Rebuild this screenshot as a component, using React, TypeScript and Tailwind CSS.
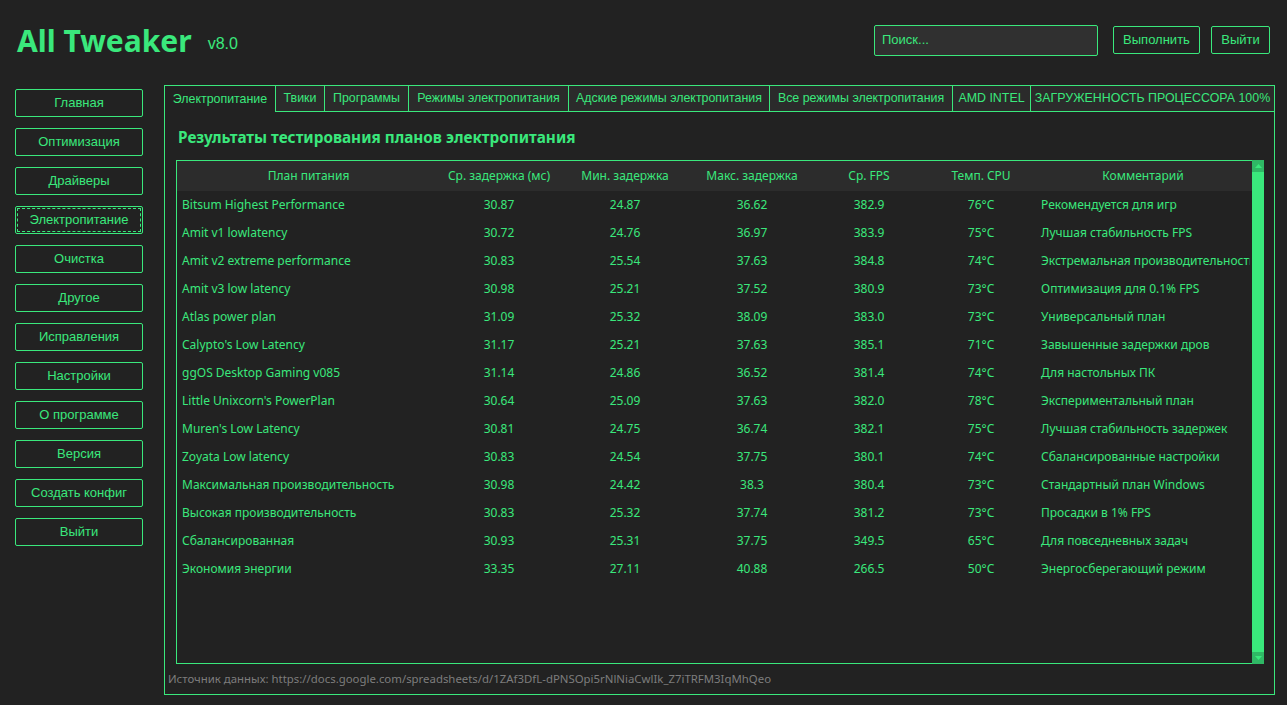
import React from 'react';

const tabs = [
  { label: 'Электропитание', w: 'w-[112px]' },
  { label: 'Твики', w: 'w-[49px]' },
  { label: 'Программы', w: 'w-[84px]' },
  { label: 'Режимы электропитания', w: 'w-[160px]' },
  { label: 'Адские режимы электропитания', w: 'w-[201px]' },
  { label: 'Все режимы электропитания', w: 'w-[183px]' },
  { label: 'AMD INTEL', w: 'w-[78px]' },
  { label: 'ЗАГРУЖЕННОСТЬ ПРОЦЕССОРА 100%', w: 'flex-1' },
];

const menu = [
  'Главная',
  'Оптимизация',
  'Драйверы',
  'Электропитание',
  'Очистка',
  'Другое',
  'Исправления',
  'Настройки',
  'О программе',
  'Версия',
  'Создать конфиг',
  'Выйти',
];

const rows: string[][] = [
  ['Bitsum Highest Performance', '30.87', '24.87', '36.62', '382.9', '76°C', 'Рекомендуется для игр'],
  ['Amit v1 lowlatency', '30.72', '24.76', '36.97', '383.9', '75°C', 'Лучшая стабильность FPS'],
  ['Amit v2 extreme performance', '30.83', '25.54', '37.63', '384.8', '74°C', 'Экстремальная производительность'],
  ['Amit v3 low latency', '30.98', '25.21', '37.52', '380.9', '73°C', 'Оптимизация для 0.1% FPS'],
  ['Atlas power plan', '31.09', '25.32', '38.09', '383.0', '73°C', 'Универсальный план'],
  ["Calypto's Low Latency", '31.17', '25.21', '37.63', '385.1', '71°C', 'Завышенные задержки дров'],
  ['ggOS Desktop Gaming v085', '31.14', '24.86', '36.52', '381.4', '74°C', 'Для настольных ПК'],
  ["Little Unixcorn's PowerPlan", '30.64', '25.09', '37.63', '382.0', '78°C', 'Экспериментальный план'],
  ["Muren's Low Latency", '30.81', '24.75', '36.74', '382.1', '75°C', 'Лучшая стабильность задержек'],
  ['Zoyata Low latency', '30.83', '24.54', '37.75', '380.1', '74°C', 'Сбалансированные настройки'],
  ['Максимальная производительность', '30.98', '24.42', '38.3', '380.4', '73°C', 'Стандартный план Windows'],
  ['Высокая производительность', '30.83', '25.32', '37.74', '381.2', '73°C', 'Просадки в 1% FPS'],
  ['Сбалансированная', '30.93', '25.31', '37.75', '349.5', '65°C', 'Для повседневных задач'],
  ['Экономия энергии', '33.35', '27.11', '40.88', '266.5', '50°C', 'Энергосберегающий режим'],
];

const headers = ['План питания', 'Ср. задержка (мс)', 'Мин. задержка', 'Макс. задержка', 'Ср. FPS', 'Темп. CPU', 'Комментарий'];
const colW = ['w-[263px]', 'w-[118px]', 'w-[134px]', 'w-[120px]', 'w-[114px]', 'w-[110px]', 'w-[214px]'];

function ScrollArrow({ up }: { up?: boolean }) {
  return (
    <div className="h-[12px] w-[12px] bg-[#2fb865] flex items-center justify-center">
      <svg width="7" height="4" viewBox="0 0 7 4">
        <path d={up ? 'M0 4 L3.5 0 L7 4 Z' : 'M0 0 L3.5 4 L7 0 Z'} fill="#3ae87c" />
      </svg>
    </div>
  );
}

export default function App() {
  return (
    <div className="w-[1287px] h-[705px] bg-[#222222] overflow-hidden text-[#3ae87c] font-['Liberation_Sans',Arial,sans-serif]">
      {/* Header */}
      <div className="h-[80px] flex items-center pl-[17px] pr-[17px]">
        <h1 className="text-[30px] leading-none font-bold font-['Noto_Sans',sans-serif] mt-[2px]">All Tweaker</h1>
        <span className="ml-[16px] text-[16px] mt-[8px]">v8.0</span>
        <div className="ml-auto w-[224px] h-[31px] border border-[#3ae87c] bg-[#303030] rounded-[2px] flex items-center px-[7px] text-[13px]">
          Поиск...
        </div>
        <button className="ml-[15px] w-[87px] h-[28px] border border-[#3ae87c] rounded-[2px] text-[13px]">Выполнить</button>
        <button className="ml-[11px] w-[59px] h-[28px] border border-[#3ae87c] rounded-[2px] text-[13px]">Выйти</button>
      </div>

      <div className="flex mt-[5px]">
        {/* Sidebar */}
        <div className="w-[164px] pl-[15px] pt-[4px] flex flex-col gap-[11px]">
          {menu.map((m) => (
            <button
              key={m}
              className={`w-[128px] h-[28px] border border-[#3ae87c] rounded-[2px] text-[13px] ${
                m === 'Электропитание' ? 'outline-1 outline-dashed outline-offset-[-3px] outline-[#3ae87c]' : ''
              }`}
            >
              {m}
            </button>
          ))}
        </div>

        {/* Main panel */}
        <div className="w-[1111px] flex flex-col">
          <div className="flex h-[27px]">
            {tabs.map((t, i) => (
              <div
                key={t.label}
                className={`${t.w} h-[27px] flex items-center justify-center whitespace-nowrap text-[12.4px] border-t border-r border-[#3ae87c] ${
                  i === 0 ? 'border-l bg-[#222222]' : 'border-b bg-[#2b2b2b]'
                }`}
              >
                {t.label}
              </div>
            ))}
          </div>
          <div className="h-[583px] border-l border-r border-b border-[#3ae87c] flex flex-col">
            <div className="pl-[13px] pt-[14px] text-[15.3px] leading-[22px] font-bold font-['Noto_Sans',sans-serif]">
              Результаты тестирования планов электропитания
            </div>
            <div className="ml-[11px] mt-[12px] w-[1088px] h-[504px] flex">
              <div className="flex-1 border-l border-t border-b border-[#3ae87c] overflow-hidden font-['Noto_Sans',sans-serif] text-[12px]">
                <div className="flex h-[30px] bg-[#2c2c2c] items-center">
                  {headers.map((h, i) => (
                    <div key={h} className={`${colW[i]} shrink-0 text-center`}>
                      {h}
                    </div>
                  ))}
                </div>
                {rows.map((r) => (
                  <div key={r[0]} className="flex h-[28px] items-center">
                    {r.map((c, i) => (
                      <div
                        key={i}
                        className={`${colW[i]} shrink-0 whitespace-nowrap overflow-hidden ${
                          i === 0 || i === 6 ? 'pl-[5px]' : 'text-center'
                        }`}
                      >
                        {c}
                      </div>
                    ))}
                  </div>
                ))}
              </div>
              <div className="w-[12px] h-full bg-[#3ae87c] flex flex-col justify-between">
                <ScrollArrow up />
                <ScrollArrow />
              </div>
            </div>
            <div className="pl-[3px] mt-[7px] text-[11.4px] leading-[16px] text-[#7d7d7d] font-['Noto_Sans',sans-serif]">
              Источник данных: https://docs.google.com/spreadsheets/d/1ZAf3DfL-dPNSOpi5rNlNiaCwlIk_Z7iTRFM3IqMhQeo
            </div>
          </div>
        </div>
      </div>
    </div>
  );
}
